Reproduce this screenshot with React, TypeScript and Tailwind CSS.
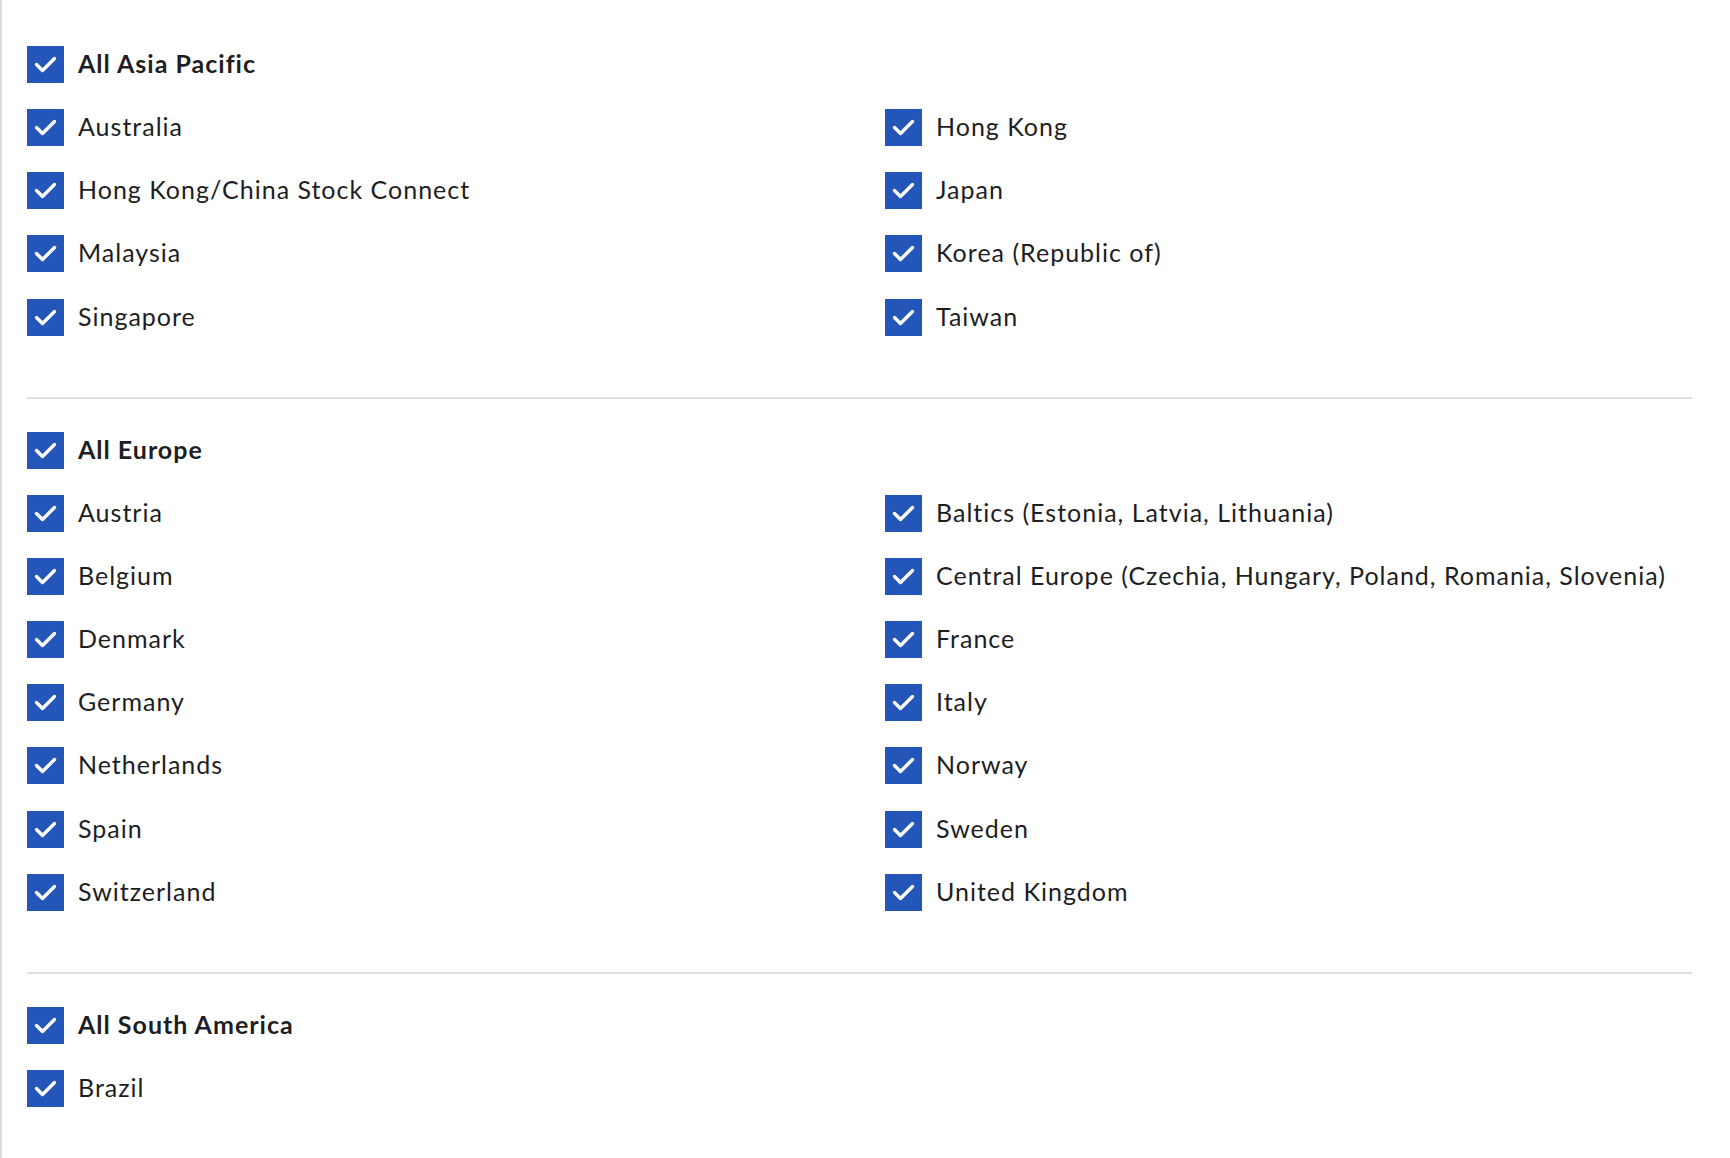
import { useState } from 'react';

interface Region {
  id: string;
  label: string;
  markets: string[];
}

const REGIONS: Region[] = [
  {
    id: 'apac',
    label: 'All Asia Pacific',
    markets: [
      'Australia',
      'Hong Kong',
      'Hong Kong/China Stock Connect',
      'Japan',
      'Malaysia',
      'Korea (Republic of)',
      'Singapore',
      'Taiwan',
    ],
  },
  {
    id: 'europe',
    label: 'All Europe',
    markets: [
      'Austria',
      'Baltics (Estonia, Latvia, Lithuania)',
      'Belgium',
      'Central Europe (Czechia, Hungary, Poland, Romania, Slovenia)',
      'Denmark',
      'France',
      'Germany',
      'Italy',
      'Netherlands',
      'Norway',
      'Spain',
      'Sweden',
      'Switzerland',
      'United Kingdom',
    ],
  },
  {
    id: 'latam',
    label: 'All South America',
    markets: ['Brazil'],
  },
];

function CheckBox({ checked }: { checked: boolean }) {
  return (
    <span
      className={`flex h-[37px] w-[37px] shrink-0 items-center justify-center ${
        checked ? 'bg-[#2455b8]' : 'border-2 border-[#9aa3b5] bg-white'
      }`}
    >
      {checked && (
        <svg width="37" height="37" viewBox="0 0 37 37" fill="none" aria-hidden>
          <path
            d="M9.5 18.5 L15.5 24.5 L27.5 12.5"
            stroke="white"
            strokeWidth="3.4"
            strokeLinecap="round"
            strokeLinejoin="round"
          />
        </svg>
      )}
    </span>
  );
}

function CheckRow({
  label,
  checked,
  bold,
  onToggle,
}: {
  label: string;
  checked: boolean;
  bold?: boolean;
  onToggle: () => void;
}) {
  return (
    <button
      type="button"
      onClick={onToggle}
      className="flex h-[37px] items-center gap-[14px] text-left"
    >
      <CheckBox checked={checked} />
      <span
        className={`-mt-[2px] whitespace-nowrap text-[25px] leading-none tracking-[1px] text-[#1d1e23] ${
          bold ? 'font-bold' : 'font-normal'
        }`}
      >
        {label}
      </span>
    </button>
  );
}

export default function App() {
  const [unchecked, setUnchecked] = useState<Record<string, boolean>>({});
  const toggle = (key: string) => setUnchecked((u) => ({ ...u, [key]: !u[key] }));

  return (
    <div className="min-h-screen border-l-2 border-[#dddddd] bg-white pl-[25px] pr-[38px] pt-[46px] pb-[50px] font-['Lato',sans-serif]">
      {REGIONS.map((region, idx) => {
        const allKey = `${region.id}:all`;
        return (
          <section
            key={region.id}
            className={idx > 0 ? 'mt-[61px] border-t-2 border-[#dedede] pt-[33px]' : ''}
          >
            <CheckRow
              label={region.label}
              bold
              checked={!unchecked[allKey]}
              onToggle={() => toggle(allKey)}
            />
            <div className="mt-[26px] grid grid-cols-[858px_1fr] gap-y-[26.2px]">
              {region.markets.map((m) => {
                const key = `${region.id}:${m}`;
                return (
                  <CheckRow
                    key={key}
                    label={m}
                    checked={!unchecked[key]}
                    onToggle={() => toggle(key)}
                  />
                );
              })}
            </div>
          </section>
        );
      })}
    </div>
  );
}
